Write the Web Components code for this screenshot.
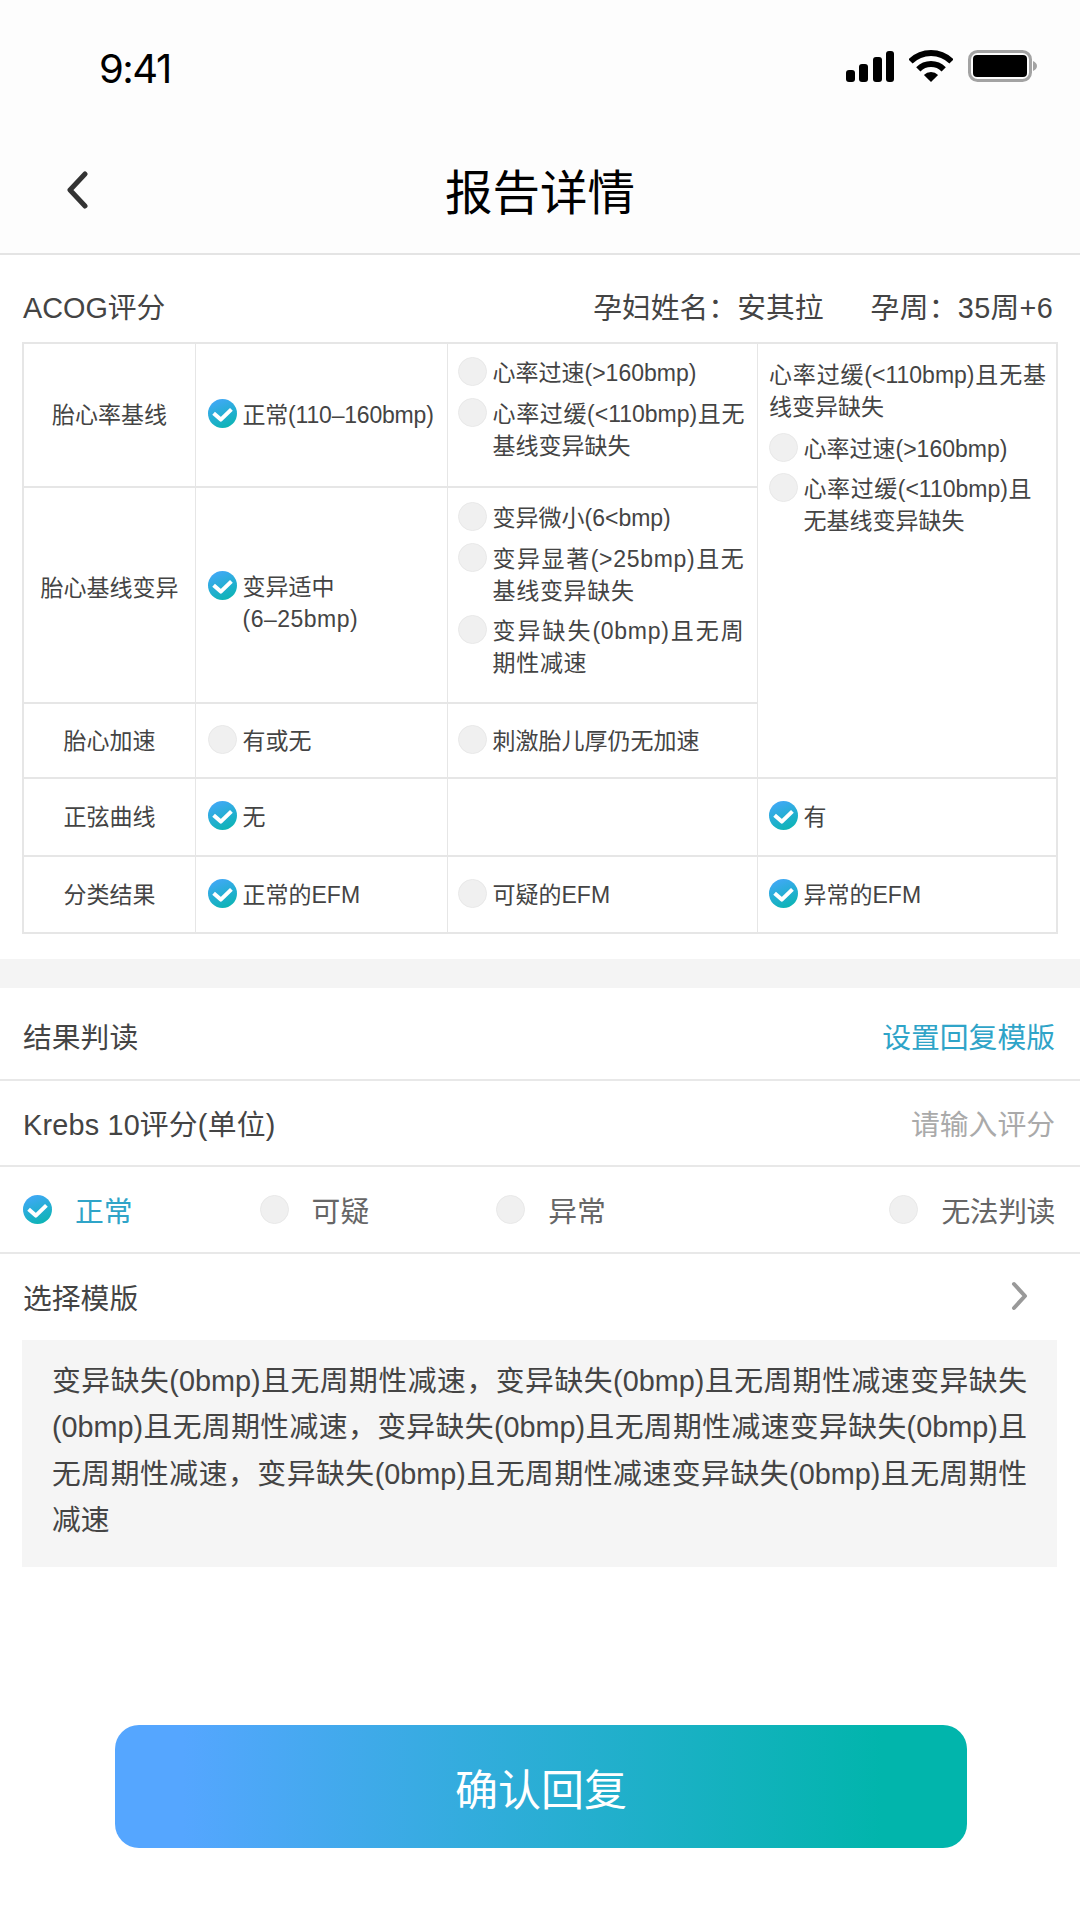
<!DOCTYPE html>
<html lang="zh-CN">
<head>
<meta charset="utf-8">
<title>报告详情</title>
<style>
  html, body { margin: 0; padding: 0; background: #fff; }
  body {
    width: 1080px;
    font-family: "Liberation Sans", "Noto Sans CJK SC", sans-serif;
    color: #333;
  }
</style>
</head>
<body>
<status-bar></status-bar>
<nav-bar>报告详情</nav-bar>
<report-head></report-head>

<acog-table>
  <acog-cell label>胎心率基线</acog-cell>
  <acog-cell><check-option checked style="letter-spacing:-.2px">正常(110–160bmp)</check-option></acog-cell>
  <acog-cell top style="--pad:13px;--text-w:252px">
    <check-option>心率过速(&gt;160bmp)</check-option>
    <check-option>心率过缓(&lt;110bmp)且无基线变异缺失</check-option>
  </acog-cell>
  <acog-cell tall style="--text-w:228px">
    <p slot="note">心率过缓(&lt;110bmp)且无基线变异缺失</p>
    <check-option>心率过速(&gt;160bmp)</check-option>
    <check-option>心率过缓(&lt;110bmp)且无基线变异缺失</check-option>
  </acog-cell>

  <acog-cell label shift-up>胎心基线变异</acog-cell>
  <acog-cell shift-down><check-option checked>变异适中<br><span style="letter-spacing:.5px">(6–25bmp)</span></check-option></acog-cell>
  <acog-cell top style="--pad:14px;--text-w:252px">
    <check-option>变异微小(6&lt;bmp)</check-option>
    <check-option style="letter-spacing:.7px">变异显著(&gt;25bmp)且无基线变异缺失</check-option>
    <check-option style="letter-spacing:.7px">变异缺失(0bmp)且无周期性减速</check-option>
  </acog-cell>

  <acog-cell label>胎心加速</acog-cell>
  <acog-cell><check-option>有或无</check-option></acog-cell>
  <acog-cell style="--pl:10px"><check-option>刺激胎儿厚仍无加速</check-option></acog-cell>

  <acog-cell label>正弦曲线</acog-cell>
  <acog-cell><check-option checked>无</check-option></acog-cell>
  <acog-cell></acog-cell>
  <acog-cell end><check-option checked>有</check-option></acog-cell>

  <acog-cell label>分类结果</acog-cell>
  <acog-cell><check-option checked>正常的EFM</check-option></acog-cell>
  <acog-cell style="--pl:10px"><check-option>可疑的EFM</check-option></acog-cell>
  <acog-cell end><check-option checked>异常的EFM</check-option></acog-cell>
</acog-table>

<section-gap></section-gap>

<form-row style="--row-h:93px;--row-pt:4px">
  <span>结果判读</span>
  <span slot="end" style="color:#2fa4c8">设置回复模版</span>
</form-row>
<form-row style="--row-h:86px;--row-pb:2px">
  <span style="letter-spacing:.2px">Krebs 10评分(单位)</span>
  <span slot="end" style="color:#aaa">请输入评分</span>
</form-row>
<result-picker></result-picker>
<form-row style="--row-h:86px;--row-pb:2px;--row-line:0" chevron>
  <span>选择模版</span>
</form-row>

<reply-text>
  <span>变异缺失(0bmp)且无周期性减速，变异缺失(0bmp)且无周期性减速变异缺失</span>
  <span>(0bmp)且无周期性减速，变异缺失(0bmp)且无周期性减速变异缺失(0bmp)且</span>
  <span>无周期性减速，变异缺失(0bmp)且无周期性减速变异缺失(0bmp)且无周期性</span>
  <span class="last">减速</span>
</reply-text>

<reply-button>确认回复</reply-button>

<script>
  const CHECK_ICON = `
    <svg viewBox="0 0 29 29" width="29" height="29" aria-hidden="true">
      <defs>
        <linearGradient id="g" x1="0.25" y1="0" x2="0.65" y2="1">
          <stop offset="0" stop-color="#42a8f8"/>
          <stop offset="1" stop-color="#0cb4b4"/>
        </linearGradient>
      </defs>
      <circle cx="14.5" cy="14.5" r="14.5" fill="url(#g)"/>
      <path d="M5.6 14.2l7.2 6.4L23.4 10.4" fill="none" stroke="#fff" stroke-width="4" stroke-linejoin="round"/>
    </svg>`;
  const EMPTY_ICON = `
    <svg viewBox="0 0 29 29" width="29" height="29" aria-hidden="true">
      <circle cx="14.5" cy="14.5" r="14" fill="#f0f0f0" stroke="#e8e8e8"/>
    </svg>`;

  class StatusBar extends HTMLElement {
    constructor() {
      super();
      this.attachShadow({ mode: "open" });
      this.shadowRoot.innerHTML = `
        <style>
          :host {
            display: flex;
            align-items: center;
            justify-content: space-between;
            box-sizing: border-box;
            height: 110px;
            padding: 27px 43px 0 99px;
            background: #fdfdfd;
          }
          .time { font: 400 40px Inter, sans-serif; color: #000; letter-spacing: -1.5px; }
          .icons { display: flex; align-items: center; gap: 15px; margin-top: -5px; }
          svg { display: block; }
        </style>
        <span class="time">9:41</span>
        <div class="icons">
          <svg width="48" height="31" viewBox="0 0 48 31">
            <rect x="0" y="19" width="9" height="12" rx="3"/>
            <rect x="13" y="13" width="9" height="18" rx="3"/>
            <rect x="27" y="6" width="9" height="25" rx="3"/>
            <rect x="40" y="0" width="8" height="31" rx="3"/>
          </svg>
          <svg width="44" height="32" viewBox="0 0 44 32">
            <path d="M1.5 11.5A29 29 0 0 1 42.5 11.5" fill="none" stroke="#000" stroke-width="6"/>
            <path d="M9.3 19.3A18 18 0 0 1 34.7 19.3" fill="none" stroke="#000" stroke-width="6"/>
            <path d="M22 32L14.9 24.9A10 10 0 0 1 29.1 24.9Z"/>
          </svg>
          <svg width="69" height="32" viewBox="0 0 69 32">
            <rect x="1.5" y="1.5" width="61" height="29" rx="8" fill="none" stroke="#a3a3a3" stroke-width="3"/>
            <rect x="5" y="5" width="54" height="22" rx="4"/>
            <path d="M65 11c2.500 1 4 3 4 5s-1.500 4-4 5z" fill="#a3a3a3"/>
          </svg>
        </div>
      `;
    }
  }

  class NavBar extends HTMLElement {
    constructor() {
      super();
      this.attachShadow({ mode: "open" });
      this.shadowRoot.innerHTML = `
        <style>
          :host {
            display: flex;
            align-items: center;
            justify-content: center;
            position: relative;
            box-sizing: border-box;
            height: 145px;
            padding-top: 16px;
            background: #fdfdfd;
            border-bottom: 2px solid #e4e4e4;
            font-size: 47.500px;
            color: #000;
          }
          svg { position: absolute; left: 64px; top: 61px; }
        </style>
        <svg width="26" height="38" viewBox="0 0 26 38">
          <path d="M21 3L6 19l15 16" fill="none" stroke="#333" stroke-width="5" stroke-linecap="round" stroke-linejoin="round"/>
        </svg>
        <slot></slot>
      `;
    }
  }

  class ReportHead extends HTMLElement {
    constructor() {
      super();
      this.attachShadow({ mode: "open" });
      this.shadowRoot.innerHTML = `
        <style>
          :host {
            display: flex;
            align-items: center;
            box-sizing: border-box;
            height: 87px;
            padding: 14px 27px 0 23px;
            font-size: 28.800px;
            color: #444;
          }
          .title { margin-right: auto; }
          .week { margin-left: 47px; letter-spacing: .3px; }
        </style>
        <span class="title">ACOG评分</span>
        <span>孕妇姓名：安其拉</span>
        <span class="week">孕周：35周+6</span>
      `;
    }
  }

  class AcogTable extends HTMLElement {
    constructor() {
      super();
      this.attachShadow({ mode: "open" });
      this.shadowRoot.innerHTML = `
        <style>
          :host {
            display: grid;
            box-sizing: border-box;
            width: 1036px;
            height: 592px;
            margin-left: 22px;
            border: 2px solid #e6e6e6;
            grid-template-columns: 172px 252px 310px 1fr;
            grid-template-rows: 144px 216px 75px 78px 1fr;
            font-size: 23px;
            line-height: 32px;
            color: #444;
          }
        </style>
        <slot></slot>
      `;
    }
  }

  class AcogCell extends HTMLElement {
    constructor() {
      super();
      this.attachShadow({ mode: "open" });
      this.shadowRoot.innerHTML = `
        <style>
          :host {
            display: flex;
            flex-direction: column;
            justify-content: center;
            gap: 8.500px;
            box-sizing: border-box;
            padding: 0 4px 0 var(--pl, 12px);
            border-right: 1px solid #e6e6e6;
            border-bottom: 2px solid #e6e6e6;
            min-width: 0;
          }
          :host([label]) { align-items: center; padding: 0; }
          :host([top]) { justify-content: flex-start; padding-top: var(--pad); padding-left: 10px; }
          :host([tall]) {
            grid-row: span 3;
            justify-content: flex-start;
            padding: 14.500px 4px 0 11px;
            border-right: 0;
          }
          :host([end]) { border-right: 0; padding-left: 11px; }
          :host(:nth-last-child(-n+4)) { border-bottom: 0; }
          :host([shift-up]) { padding-bottom: 15px; }
          :host([shift-down]) { padding-top: 15px; }
          ::slotted(p) { width: 277px; margin: 0 0 1.500px; text-align: justify; }
        </style>
        <slot name="note"></slot>
        <slot></slot>
      `;
    }
  }

  class CheckOption extends HTMLElement {
    constructor() {
      super();
      this.attachShadow({ mode: "open" });
      this.shadowRoot.innerHTML = `
        <style>
          :host { display: flex; align-items: flex-start; gap: 5.500px; }
          svg { display: block; flex: none; }
          .text { width: var(--text-w, auto); text-align: justify; }
        </style>
        ${this.hasAttribute("checked") ? CHECK_ICON : EMPTY_ICON}
        <div class="text"><slot></slot></div>
      `;
    }
  }

  class SectionGap extends HTMLElement {
    constructor() {
      super();
      this.attachShadow({ mode: "open" });
      this.shadowRoot.innerHTML = `
        <style>
          :host { display: block; height: 29px; margin-top: 25px; background: #f4f4f4; }
        </style>
      `;
    }
  }

  class FormRow extends HTMLElement {
    constructor() {
      super();
      this.attachShadow({ mode: "open" });
      const chevron = this.hasAttribute("chevron") ? `
        <svg width="18" height="30" viewBox="0 0 18 30">
          <path d="M3 3l11 12L3 27" fill="none" stroke="#999" stroke-width="4" stroke-linecap="round" stroke-linejoin="round"/>
        </svg>` : "";
      this.shadowRoot.innerHTML = `
        <style>
          :host {
            display: flex;
            align-items: center;
            justify-content: space-between;
            box-sizing: border-box;
            height: var(--row-h, 86px);
            padding: var(--row-pt, 0) 25px var(--row-pb, 0) 23px;
            border-bottom: var(--row-line, 2px) solid #e8e8e8;
            font-size: 28.800px;
            color: #444;
          }
          svg { display: block; margin-right: 26px; }
        </style>
        <div><slot></slot></div>
        <slot name="end"></slot>
        ${chevron}
      `;
    }
  }

  class ResultPicker extends HTMLElement {
    constructor() {
      super();
      this.attachShadow({ mode: "open" });
      const items = [["正常", true], ["可疑", false], ["异常", false], ["无法判读", false]];
      this.shadowRoot.innerHTML = `
        <style>
          :host {
            display: flex;
            align-items: center;
            gap: 127px;
            box-sizing: border-box;
            height: 87px;
            padding: 0 25px 0 23px;
            border-bottom: 2px solid #e8e8e8;
            font-size: 28.800px;
            color: #666;
          }
          .item { display: flex; align-items: center; gap: 23px; }
          .item:last-child { margin-left: auto; letter-spacing: -.4px; }
          .on { color: #2fa4c8; }
          svg { display: block; }
        </style>
        ${items.map(([text, on]) => `
          <div class="item ${on ? "on" : ""}">${on ? CHECK_ICON : EMPTY_ICON}<span>${text}</span></div>
        `).join("")}
      `;
    }
  }

  class ReplyText extends HTMLElement {
    constructor() {
      super();
      this.attachShadow({ mode: "open" });
      this.shadowRoot.innerHTML = `
        <style>
          :host {
            display: block;
            box-sizing: border-box;
            width: 1035px;
            height: 227px;
            margin-left: 22px;
            padding: 18px 30px 0;
            background: #f5f5f5;
            font-size: 28.800px;
            line-height: 46.300px;
            color: #444;
          }
          ::slotted(span) { display: block; white-space: nowrap; text-align: justify; text-align-last: justify; }
          ::slotted(.last) { text-align-last: left; }
        </style>
        <slot></slot>
      `;
    }
  }

  class ReplyButton extends HTMLElement {
    constructor() {
      super();
      this.attachShadow({ mode: "open" });
      this.shadowRoot.innerHTML = `
        <style>
          :host {
            display: flex;
            align-items: center;
            justify-content: center;
            width: 852px;
            height: 123px;
            margin: 158px 0 0 115px;
            border-radius: 24px;
            background: linear-gradient(90deg, #55a6ff 8%, #01b5ac 90%);
            color: #fff;
            font-size: 43px;
          }
        </style>
        <slot></slot>
      `;
    }
  }

  customElements.define("status-bar", StatusBar);
  customElements.define("nav-bar", NavBar);
  customElements.define("report-head", ReportHead);
  customElements.define("acog-table", AcogTable);
  customElements.define("acog-cell", AcogCell);
  customElements.define("check-option", CheckOption);
  customElements.define("section-gap", SectionGap);
  customElements.define("form-row", FormRow);
  customElements.define("result-picker", ResultPicker);
  customElements.define("reply-text", ReplyText);
  customElements.define("reply-button", ReplyButton);
</script>
</body>
</html>
